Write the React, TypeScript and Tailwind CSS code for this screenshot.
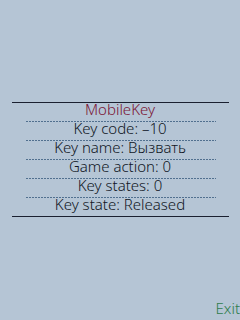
const rows = ["Key code: \u201310", "Key name: Вызвать", "Game action: 0", "Key states: 0", "Key state: Released"];

const Dotted = () => (
  <div className="ml-[26px] w-[190px] h-px bg-[repeating-linear-gradient(90deg,#51708f_0px,#51708f_2px,transparent_2px,transparent_3px)]" />
);

const Row = ({ text, title }: { text: string; title?: boolean }) => (
  <div
    className={`h-[18px] leading-[13px] text-center text-[15px] font-light ${title ? "text-[#7a1434]" : "text-[#101624]"}`}
  >
    {text}
  </div>
);

export default function App() {
  return (
    <div
      className="w-[240px] h-[320px] bg-[#b5c5d5] flex flex-col overflow-hidden"
      style={{ fontFamily: '"Noto Sans", sans-serif' }}
    >
      <div className="h-[102px]" />
      <div className="ml-[12px] w-[217px] h-px bg-[#1a2030]" />
      <Row text="MobileKey" title />
      {rows.map((r) => (
        <div key={r}>
          <Dotted />
          <Row text={r} />
        </div>
      ))}
      <div className="ml-[12px] w-[217px] h-px bg-[#1a2030]" />
      <div className="flex-1" />
      <div className="flex justify-end pr-[0px] pb-[5px] h-[18px] leading-[13px] text-[15px] font-light text-[#2e7c4c]">Exit</div>
    </div>
  );
}
